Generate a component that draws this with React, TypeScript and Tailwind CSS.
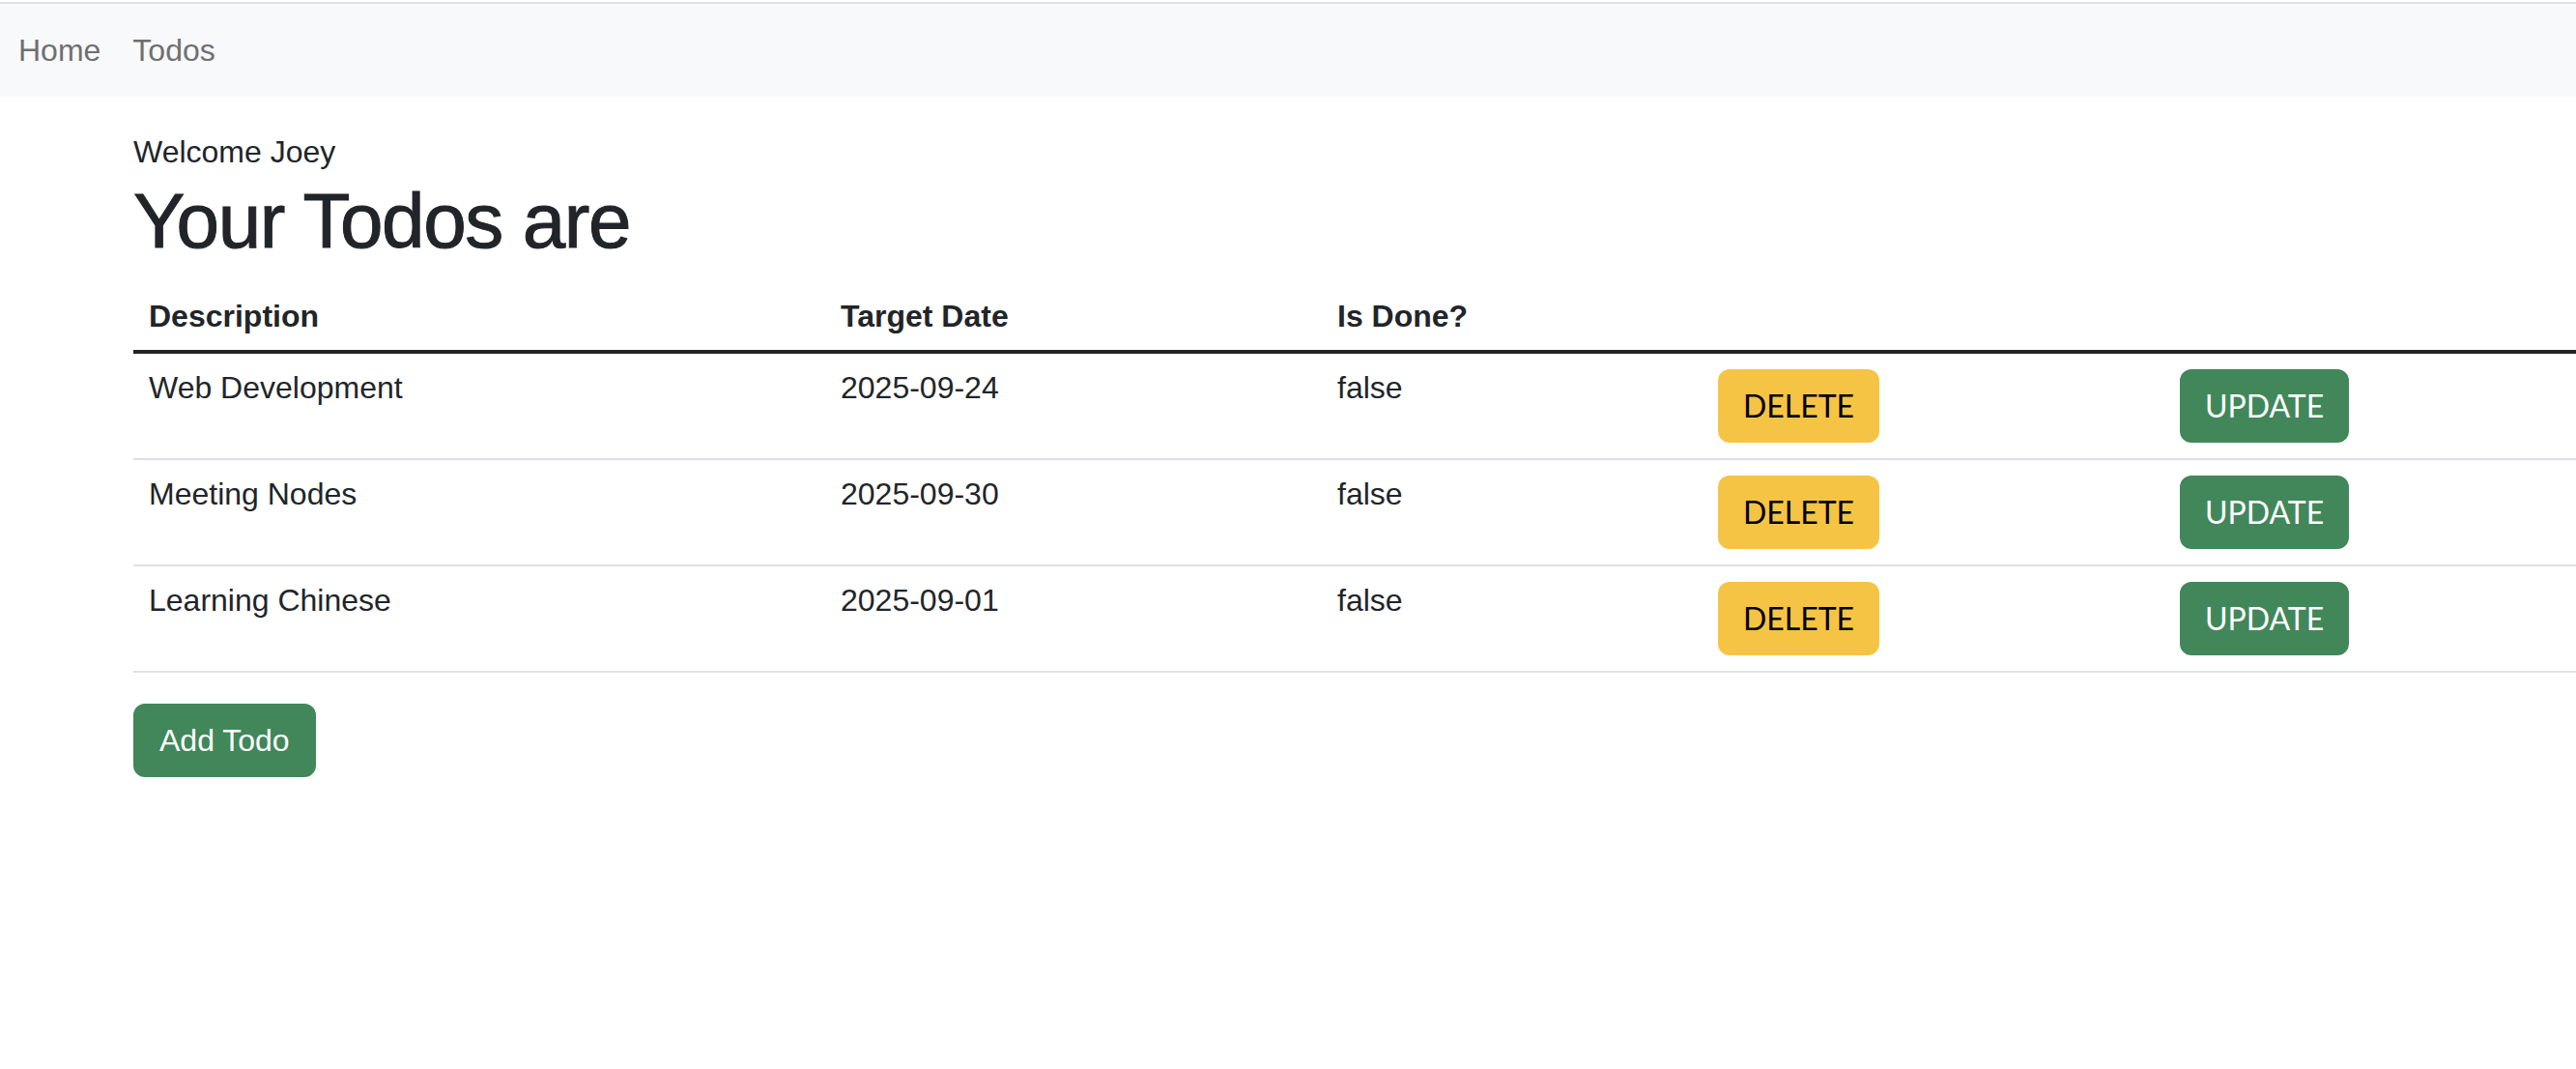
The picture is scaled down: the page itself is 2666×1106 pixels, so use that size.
const todos = [
  { id: 1, description: "Web Development", targetDate: "2025-09-24", done: false },
  { id: 2, description: "Meeting Nodes", targetDate: "2025-09-30", done: false },
  { id: 3, description: "Learning Chinese", targetDate: "2025-09-01", done: false },
];

export default function App() {
  return (
    <div
      className="min-h-screen w-full overflow-hidden bg-white pt-[2px] text-[#212529]"
      style={{ fontFamily: '"Liberation Sans", Arial, sans-serif' }}
    >
      {/* Navbar */}
      <nav className="flex h-[98px] items-center gap-[33px] border-t-2 border-[#e1e1e1] bg-[#f8f9fa] pl-[19px] text-[32px] leading-[48px] text-[#6f7071]">
        <a href="#">Home</a>
        <a href="#">Todos</a>
      </nav>

      {/* Content */}
      <div className="pl-[138px]">
        <div className="mt-[33px] text-[32px] leading-[48px]">Welcome Joey</div>
        <h1 className="mb-[5px] text-[80px] font-medium leading-[96px] tracking-[-1.4px] [-webkit-text-stroke:1px_#212529]">
          Your Todos are
        </h1>

        <table className="w-[2528px] table-fixed border-collapse text-left text-[32px] leading-[48px]">
          <colgroup>
            <col className="w-[716px]" />
            <col className="w-[514px]" />
            <col className="w-[394px]" />
            <col className="w-[478px]" />
            <col />
          </colgroup>
          <thead>
            <tr className="border-b-4 border-[#212529]">
              <th className="px-[16px] pt-[21px] pb-[11px] font-bold">Description</th>
              <th className="px-[16px] pt-[21px] pb-[11px] font-bold">Target Date</th>
              <th className="px-[16px] pt-[21px] pb-[11px] font-bold">Is Done?</th>
              <th className="px-[16px] pt-[21px] pb-[11px]"></th>
              <th className="px-[16px] pt-[21px] pb-[11px]"></th>
            </tr>
          </thead>
          <tbody>
            {todos.map((todo) => (
              <tr key={todo.id} className="border-b-2 border-[#dee2e6]">
                <td className="px-[16px] pt-[11px] align-top">{todo.description}</td>
                <td className="px-[16px] pt-[11px] align-top">{todo.targetDate}</td>
                <td className="px-[16px] pt-[11px] align-top">{todo.done.toString()}</td>
                <td className="px-[16px] py-[16px] align-top">
                  <button
                    className="rounded-[12px] border-2 border-[#f6c444] bg-[#f6c444] px-[24px] py-[12px] text-[32px] leading-[48px] text-black"
                    style={{ fontFamily: "Lato, sans-serif" }}
                  >
                    DELETE
                  </button>
                </td>
                <td className="px-[16px] py-[16px] align-top">
                  <button
                    className="rounded-[12px] border-2 border-[#41875a] bg-[#41875a] px-[24px] py-[12px] text-[32px] leading-[48px] text-white"
                    style={{ fontFamily: "Lato, sans-serif" }}
                  >
                    UPDATE
                  </button>
                </td>
              </tr>
            ))}
          </tbody>
        </table>

        <button className="mt-[32px] rounded-[12px] border-2 border-[#41875a] bg-[#41875a] px-[25px] py-[12px] text-[32px] leading-[48px] text-white">
          Add Todo
        </button>
      </div>
    </div>
  );
}
